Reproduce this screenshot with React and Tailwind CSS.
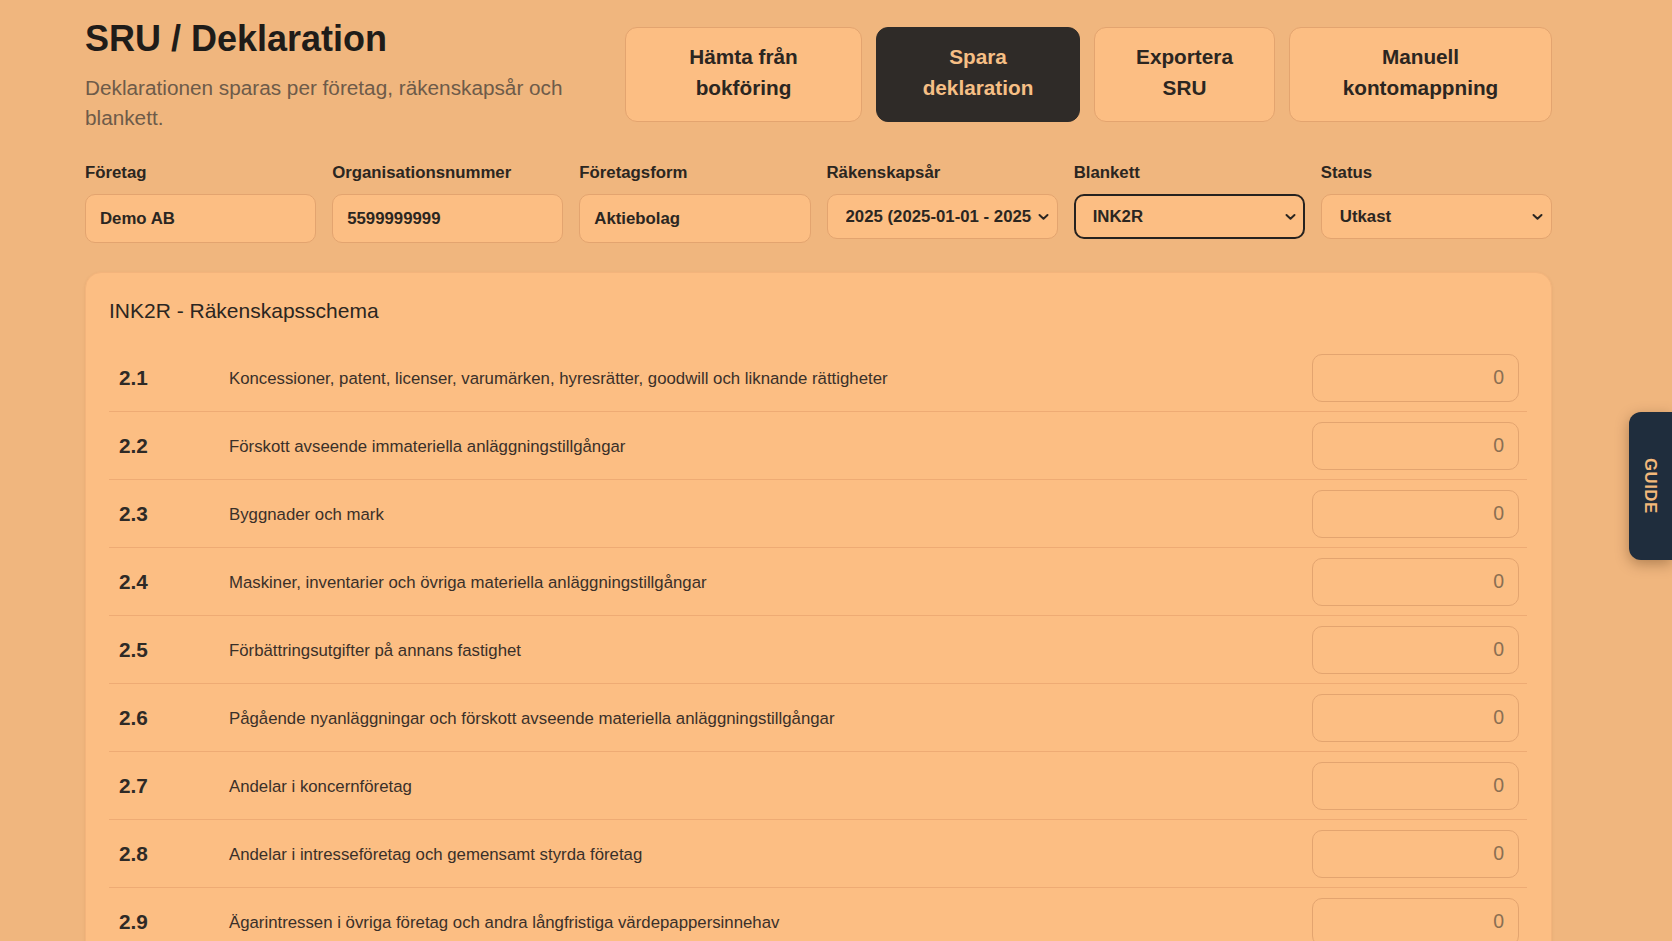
import React from "react";

const rows = [
  ["2.1", "Koncessioner, patent, licenser, varumärken, hyresrätter, goodwill och liknande rättigheter"],
  ["2.2", "Förskott avseende immateriella anläggningstillgångar"],
  ["2.3", "Byggnader och mark"],
  ["2.4", "Maskiner, inventarier och övriga materiella anläggningstillgångar"],
  ["2.5", "Förbättringsutgifter på annans fastighet"],
  ["2.6", "Pågående nyanläggningar och förskott avseende materiella anläggningstillgångar"],
  ["2.7", "Andelar i koncernföretag"],
  ["2.8", "Andelar i intresseföretag och gemensamt styrda företag"],
  ["2.9", "Ägarintressen i övriga företag och andra långfristiga värdepappersinnehav"],
  ["2.10", "Fordringar hos koncern-, intresse- och gemensamt styrda företag"],
];

function Chevron() {
  return (
    <svg
      className="pointer-events-none absolute right-[9px] top-1/2 -translate-y-1/2"
      width="11"
      height="7"
      viewBox="0 0 11 7"
      fill="none"
    >
      <path d="M1.5 1.5 L5.5 5.2 L9.5 1.5" stroke="#2b2621" strokeWidth="2" strokeLinecap="round" strokeLinejoin="round" />
    </svg>
  );
}

function Field({ label, children }) {
  return (
    <label className="flex flex-col">
      <span className="mb-[9px] mt-[1px] text-[16.8px] leading-[24px] font-bold text-[#2b2621]">{label}</span>
      {children}
    </label>
  );
}

function TextField({ label, value }) {
  return (
    <Field label={label}>
      <input
        defaultValue={value}
        className="h-[49px] w-full rounded-[10px] border border-[#e3a46f] bg-[#fcbe83] px-[14px] text-[16.8px] font-bold text-[#2b2621] outline-none"
      />
    </Field>
  );
}

function SelectField({ label, value, options, focused, padRight = "pr-[20px]" }) {
  return (
    <Field label={label}>
      <div className="relative">
        <select
          defaultValue={value}
          className={
            (focused
              ? "border-2 border-[#26221f] pl-[17px] "
              : "border border-[#e3a46f] pl-[18px] ") +
            "h-[45px] w-full appearance-none overflow-hidden rounded-[10px] bg-[#fcbe83] text-[16.8px] font-bold text-[#2b2621] outline-none " +
            padRight
          }
        >
          {options.map((o) => (
            <option key={o} value={o}>
              {o}
            </option>
          ))}
        </select>
        <Chevron />
      </div>
    </Field>
  );
}

function ActionButton({ children, dark, width }) {
  return (
    <button
      className={
        (dark
          ? "border-[#2f2b28] bg-[#2f2b28] text-[#f6bf85] "
          : "border-[#e3a46f] bg-[#fcbe83] text-[#2b2621] ") +
        "rounded-[12px] border px-[20px] pb-[18.5px] pt-[12.5px] text-center text-[20.75px] leading-[31px] font-bold " +
        width
      }
    >
      {children}
    </button>
  );
}

export default function App() {
  return (
    <div
      className="relative h-[941px] overflow-hidden bg-[#f0b67e]"
      style={{ fontFamily: '"Liberation Sans", Arial, sans-serif' }}
    >
      <div className="pl-[85px] pr-[120px] pt-[19px]">
        {/* page header */}
        <div className="flex items-start justify-between">
          <div className="w-[500px]">
            <h1 className="text-[36px] leading-[40px] font-bold text-[#1f1c19]">SRU / Deklaration</h1>
            <p className="mt-[14px] text-[20.75px] leading-[30px] text-[#6e5b49]">
              Deklarationen sparas per företag, räkenskapsår och blankett.
            </p>
          </div>
          <div className="mt-[8px] flex gap-[14px]">
            <ActionButton width="w-[237px]">Hämta från bokföring</ActionButton>
            <ActionButton dark width="w-[204px]">Spara deklaration</ActionButton>
            <ActionButton width="w-[181px]">Exportera SRU</ActionButton>
            <ActionButton width="w-[263px]">Manuell kontomappning</ActionButton>
          </div>
        </div>

        {/* company / year / form selectors */}
        <div className="mt-[27px] grid grid-cols-6 items-start gap-x-[16px]">
          <TextField label="Företag" value="Demo AB" />
          <TextField label="Organisationsnummer" value="5599999999" />
          <TextField label="Företagsform" value="Aktiebolag" />
          <SelectField
            label="Räkenskapsår"
            value="2025 (2025-01-01 - 2025-12-31)"
            options={["2025 (2025-01-01 - 2025-12-31)", "2024 (2024-01-01 - 2024-12-31)"]}
            padRight="pr-[25px]"
          />
          <SelectField label="Blankett" value="INK2R" options={["INK2R", "INK2S", "INK2"]} focused />
          <SelectField label="Status" value="Utkast" options={["Utkast", "Klar", "Inskickad"]} />
        </div>

        {/* balance sheet schedule */}
        <div className="mt-[29px] rounded-[16px] border border-[#f3b47c] bg-[#fcbe83] pb-6 pl-[23px] pr-[24px] pt-[23px] shadow-[0_1px_3px_rgba(150,90,30,0.12)]">
          <h2 className="mb-[19px] text-[21px] leading-[29px] text-[#2b2621]">INK2R - Räkenskapsschema</h2>
          <div>
            {rows.map(([code, text]) => (
              <div
                key={code}
                className="flex h-[68px] items-center border-b border-[#eeab74] pl-[10px] pr-[8px]"
              >
                <div className="w-[110px] shrink-0 text-[20.75px] font-bold text-[#2e2a26]">{code}</div>
                <div className="flex-1 pt-[2px] text-[16.8px] text-[#3a3029]">{text}</div>
                <input
                  defaultValue="0"
                  className="h-[48px] w-[207px] rounded-[10px] border border-[#e3a46f] bg-[#fcbe83] px-[14px] text-right text-[19.5px] text-[#8b6f52] outline-none"
                />
              </div>
            ))}
          </div>
        </div>
      </div>

      {/* side guide tab */}
      <button className="absolute right-0 top-[412px] flex h-[148px] w-[43px] items-center justify-center rounded-l-[12px] bg-[#1f2d3d] shadow-[0_4px_14px_rgba(60,30,0,0.35)]">
        <span className="text-[16.8px] font-bold tracking-[0.5px] text-[#f3b87a] [writing-mode:vertical-rl]">
          GUIDE
        </span>
      </button>
    </div>
  );
}
